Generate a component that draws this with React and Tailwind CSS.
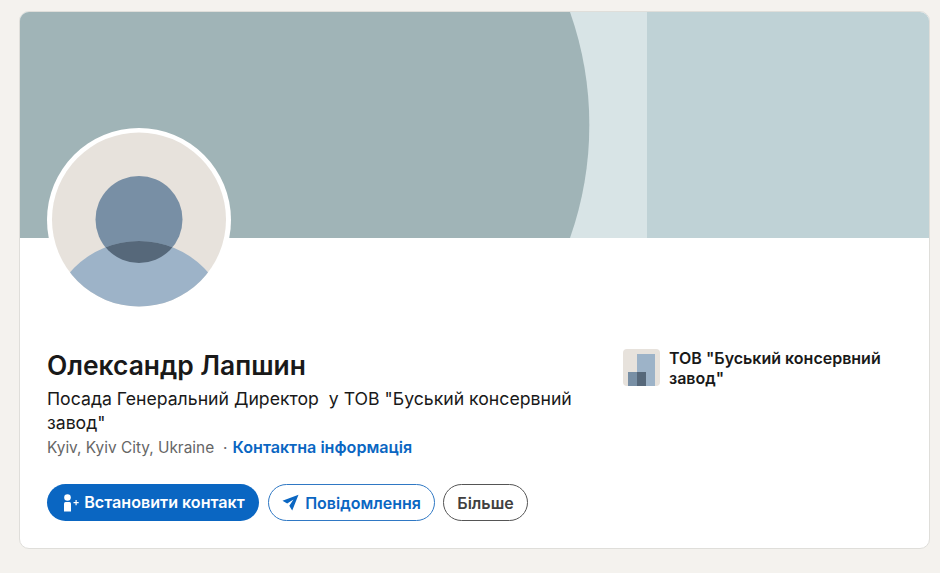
export default function App() {
  const font = { fontFamily: 'Inter, "Liberation Sans", sans-serif' };
  return (
    <div style={font} className="w-[940px] h-[573px] bg-[#f4f2ee] pt-[11px] pl-[19px] overflow-hidden">
      <div className="w-[911px] h-[538px] bg-white rounded-[10px] border border-[#dfdeda] overflow-hidden">
        <svg width="909" height="226" viewBox="20 12 909 226" className="block">
          <rect x="19" y="12" width="911" height="226" fill="#bfd2d6" />
          <rect x="19" y="12" width="628" height="226" fill="#d8e4e6" />
          <path d="M19 12 H570 A340 340 0 0 1 570 238 H19 Z" fill="#a0b4b7" />
        </svg>
        <div className="pl-[27px] -mt-[110px] relative">
          <svg width="184" height="184" viewBox="47 128 184 184" className="block">
            <defs>
              <clipPath id="disc"><circle cx="139" cy="219.5" r="87" /></clipPath>
              <clipPath id="body"><circle cx="139" cy="333" r="92" /></clipPath>
            </defs>
            <circle cx="139" cy="220" r="92" fill="#ffffff" />
            <circle cx="139" cy="219.5" r="87" fill="#e7e2dc" />
            <g clipPath="url(#disc)">
              <circle cx="139" cy="219.5" r="43.5" fill="#788fa5" />
              <circle cx="139" cy="333" r="92" fill="#9db3c8" />
              <circle cx="139" cy="219.5" r="43.5" fill="#56687a" clipPath="url(#body)" />
            </g>
          </svg>
        </div>
        <div className="flex pl-[27px] pt-[35px]">
          <div className="w-[576px] shrink-0">
            <h1 className="text-[26.4px] leading-[36px] font-semibold text-[#191919]">Олександр Лапшин</h1>
            <p className="mt-[4px] w-[540px] text-[17.67px] leading-[24px] text-[#191919] whitespace-pre-wrap">{'Посада Генеральний Директор  у ТОВ "Буський консервний завод"'}</p>
            <p className="text-[15.4px] leading-[24px] text-[#666666]">
              Kyiv, Kyiv City, Ukraine
              <span className="ml-[9px] mr-[5px]">·</span>
              <span className="text-[16.1px] font-semibold text-[#0a66c2]">Контактна інформація</span>
            </p>
            <div className="flex gap-[9px] mt-[24px]">
              <button className="h-[37px] w-[212px] pl-[2px] rounded-full bg-[#0a66c2] text-white text-[16.1px] font-semibold flex items-center justify-center gap-[5px]">
                <svg width="16" height="18" viewBox="0 0 16 18" fill="#ffffff">
                  <circle cx="4.5" cy="3.5" r="3.3" />
                  <path d="M1 9.5 Q1 8 2.5 8 H6.5 Q8 8 8 9.5 V17.5 H1 Z" />
                  <path d="M10.5 8 H12.5 V6 H13.7 V8 H15.7 V9.2 H13.7 V11.2 H12.5 V9.2 H10.5 Z" />
                </svg>
                Встановити контакт
              </button>
              <button className="h-[37px] w-[167px] rounded-full bg-white border-[1.5px] border-[#2f78c4] text-[#0a66c2] text-[16px] font-semibold flex items-center justify-center gap-[6px]">
                <svg width="17" height="17" viewBox="0 0 17 17" fill="#0a66c2">
                  <path d="M16.5 0.8 L0.5 6.8 L5.2 9.6 L11.5 5.4 L7.3 11.8 L10.2 16.6 Z" />
                </svg>
                Повідомлення
              </button>
              <button className="h-[37px] w-[85px] -ml-px rounded-full bg-white border-[1.5px] border-[#555555] text-[#404040] text-[16px] font-semibold flex items-center justify-center">
                Більше
              </button>
            </div>
          </div>
          <div className="flex items-start gap-[9px] pt-[2px]">
            <svg width="37" height="37" viewBox="0 0 37 37" className="shrink-0">
              <rect width="37" height="37" rx="4" fill="#e7e2dc" />
              <rect x="14" y="5" width="18" height="32" fill="#9db3c8" />
              <rect x="5" y="23" width="18" height="14" fill="#788fa5" />
              <rect x="14" y="23" width="9" height="14" fill="#56687a" />
            </svg>
            <div className="-mt-[1px] w-[230px] text-[16px] leading-[20px] font-semibold text-[#191919]">ТОВ "Буський консервний завод"</div>
          </div>
        </div>
      </div>
    </div>
  );
}
